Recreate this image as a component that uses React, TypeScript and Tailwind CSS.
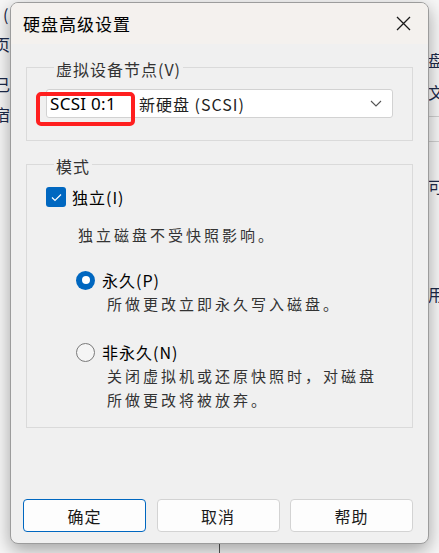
import React from 'react';

const cjk = "font-['Noto_Sans_CJK_SC','Noto_Sans',sans-serif]";

function Legend({ children }: { children: React.ReactNode }) {
  return (
    <legend className="ml-[8px] px-[2px] pt-[4px] text-[16px] leading-[20px] tracking-[1px] text-[#333]">
      {children}
    </legend>
  );
}

function Radio({ checked }: { checked?: boolean }) {
  return checked ? (
    <span className="flex h-[19px] w-[19px] items-center justify-center rounded-full bg-[#0067c0]">
      <span className="h-[8px] w-[8px] rounded-full bg-white" />
    </span>
  ) : (
    <span className="h-[19px] w-[19px] rounded-full border border-[#7a7a7a] bg-[#f5f5f5]" />
  );
}

function Btn({ label, primary }: { label: string; primary?: boolean }) {
  return (
    <button
      className={
        primary
          ? 'h-[33px] w-[123px] rounded-[4px] border border-[#0067c0] bg-[#fdfdfd] text-[16px] tracking-[1px] text-[#1a1a1a]'
          : 'h-[33px] w-[123px] rounded-[4px] border border-[#d3d3d3] bg-[#fdfdfd] text-[16px] tracking-[1px] text-[#1a1a1a]'
      }
    >
      {label}
    </button>
  );
}

export default function App() {
  return (
    <div className={`relative h-[553px] w-[439px] overflow-hidden bg-[#f7f7f7] ${cjk}`}>
      {/* window behind the dialog */}
      <div className="absolute left-[-6px] top-[4px] flex flex-col gap-[10px] text-[16px] leading-[20px] text-[#1c2a4a]">
        <span className="pl-[9px]">(</span>
        <span>页</span>
        <span className="pt-[10px]">己</span>
        <span>宿</span>
      </div>
      <div className="absolute left-[428px] top-[50px] flex w-[11px] flex-col text-[16px] leading-[20px] text-[#1c2a4a]">
        <span>盘</span>
        <span className="pt-[12px]">文</span>
        <div className="mt-[14px] h-px bg-[#d0d0d0]" />
        <div className="mt-[24px] h-px bg-[#d0d0d0]" />
        <span className="pt-[34px]">可</span>
        <span className="pt-[88px]">用</span>
      </div>
      <div className="absolute left-[219px] top-[540px] h-[13px] w-px bg-[#555]" />

      {/* dialog */}
      <div className="absolute left-[10px] top-[2px] flex h-[542px] w-[419px] flex-col overflow-hidden rounded-[8px] border border-[#9c9c9c] bg-[#f0f0f0] shadow-[0_6px_18px_rgba(0,0,0,0.35)]">
        <div className="flex h-[41px] shrink-0 items-center justify-between bg-[#f4f1ee] pl-[12px] pr-[17px]">
          <span className="text-[17px] tracking-[1px] text-black">硬盘高级设置</span>
          <svg width="15" height="15" viewBox="0 0 15 15" fill="none" stroke="#1a1a1a" strokeWidth="1.3">
            <path d="M1 1 L14 14 M14 1 L1 14" />
          </svg>
        </div>

        <div className="flex flex-1 flex-col px-[15px] pb-[11px]">
          <fieldset className="relative mt-[11px] border border-[#dadada] px-[19px] pb-[22px] pt-[10px]">
            <Legend>虚拟设备节点(V)</Legend>
            <div className="flex h-[29px] items-center rounded-[3px] border border-[#d2d2d2] bg-white pl-[3px] pr-[10px] font-['Noto_Sans','Noto_Sans_CJK_SC',sans-serif] text-[17px] tracking-[0.3px] text-black">
              <span className="w-[89px] shrink-0">SCSI 0:1</span>
              <span className={`flex-1 ${cjk} text-[16px] tracking-[1px] text-[#222]`}>新硬盘 (SCSI)</span>
              <svg width="12" height="7" viewBox="0 0 12 7" fill="none" stroke="#555" strokeWidth="1.1">
                <path d="M1 1 L6 6 L11 1" />
              </svg>
            </div>
            <div className="absolute left-[9px] top-[13px] h-[34px] w-[99px] rounded-[5px] border-[4px] border-[#ff1f1f]" />
          </fieldset>

          <fieldset className="mt-[11px] border border-[#dadada] pb-[15px] pl-[19px] pt-[11px]">
            <Legend>模式</Legend>
            <div className="flex h-[20px] items-center gap-[6px]">
              <span className="flex h-[20px] w-[20px] items-center justify-center rounded-[3px] bg-[#0067c0]">
                <svg width="11" height="9" viewBox="0 0 11 9" fill="none" stroke="white" strokeWidth="1.2">
                  <path d="M1 4.5 L4 7.5 L10 1.5" />
                </svg>
              </span>
              <span className="text-[16px] tracking-[1px] text-black">独立(I)</span>
            </div>
            <p className="ml-[32px] mt-[16px] text-[15px] leading-[24px] tracking-[3px] text-[#333]">独立磁盘不受快照影响。</p>

            <div className="ml-[30px] mt-[21px] flex h-[24px] items-center gap-[7px]">
              <Radio checked />
              <span className="text-[16px] tracking-[1px] text-black">永久(P)</span>
            </div>
            <p className="ml-[61px] text-[15px] leading-[24px] tracking-[3px] text-[#333]">所做更改立即永久写入磁盘。</p>

            <div className="ml-[30px] mt-[24px] flex h-[24px] items-center gap-[7px]">
              <Radio />
              <span className="text-[16px] tracking-[1px] text-black">非永久(N)</span>
            </div>
            <p className="ml-[61px] text-[15px] leading-[24px] tracking-[3px] text-[#333]">
              关闭虚拟机或还原快照时，对磁盘
              <br />
              所做更改将被放弃。
            </p>
          </fieldset>

          <div className="-ml-[3px] mt-auto flex justify-between">
            <Btn label="确定" primary />
            <Btn label="取消" />
            <Btn label="帮助" />
          </div>
        </div>
      </div>
    </div>
  );
}
